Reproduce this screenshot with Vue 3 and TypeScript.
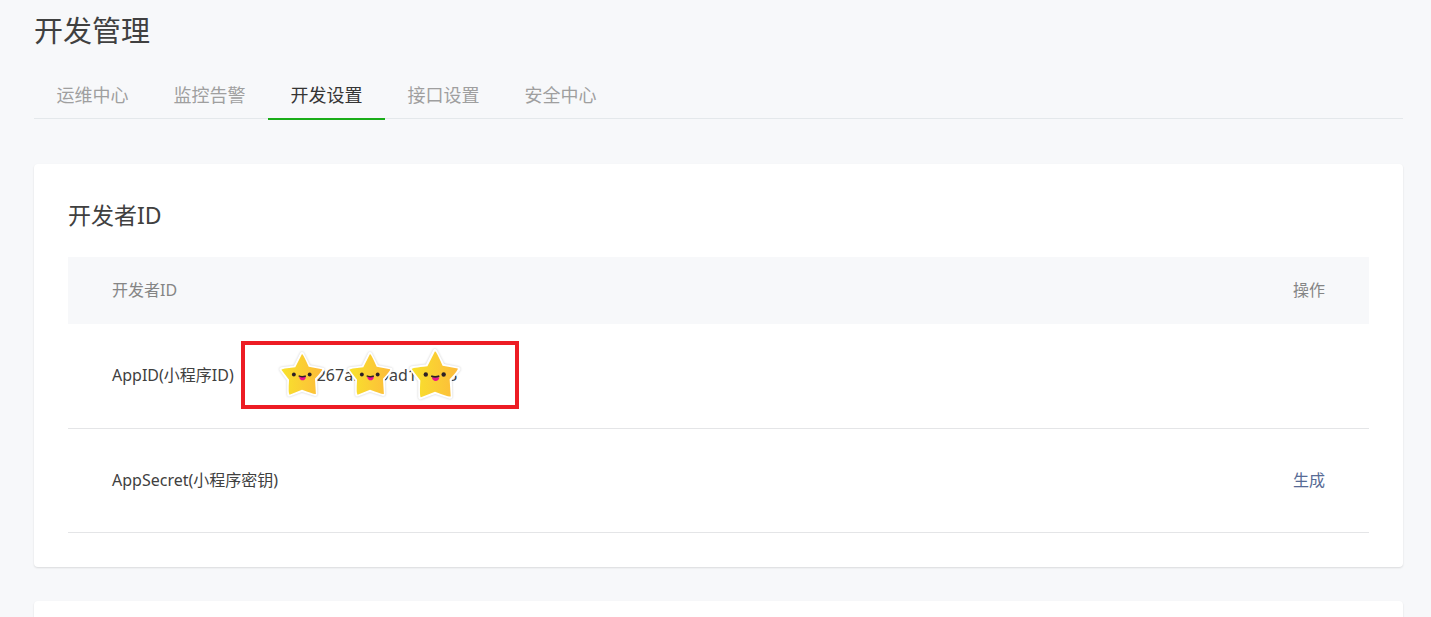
<script setup lang="ts">
import { ref } from 'vue'

const tabs: string[] = ['运维中心', '监控告警', '开发设置', '接口设置', '安全中心']
const activeTab = ref<string>('开发设置')
const stars: string[] = ['first', 'second', 'third']
</script>

<template>
  <main class="page">
    <h1 class="title">开发管理</h1>
    <nav class="tabs">
      <a
        v-for="tab in tabs"
        :key="tab"
        href="#"
        class="tab"
        :class="{ active: tab === activeTab }"
        @click.prevent="activeTab = tab"
      >{{ tab }}</a>
    </nav>

    <section class="card">
      <h2 class="card-title">开发者ID</h2>
      <table class="table">
        <thead>
          <tr>
            <th scope="col">开发者ID</th>
            <th scope="col" class="action">操作</th>
          </tr>
        </thead>
        <tbody>
          <tr>
            <td>
              <div class="entry">
                <span>AppID(小程序ID)</span>
                <div class="frame">
                  <span>1c1267abc49ad1ec4f3</span>
                  <svg v-for="star in stars" :key="star" class="star" :class="star" viewBox="0 0 48 48" aria-hidden="true">
                    <defs>
                      <linearGradient :id="`gold-${star}`" x1="0" y1="0" x2="1" y2="0">
                        <stop offset="0" stop-color="#f8e22c" />
                        <stop offset="1" stop-color="#fdbb3b" />
                      </linearGradient>
                    </defs>
                    <path class="halo" d="M24 2 L31 15.500 L45.500 18.500 L37.500 28 L38 44 L24 39.500 L10.500 44.500 L10.500 29 L2.500 18 L17 16 Z" />
                    <path :fill="`url(#gold-${star})`" d="M24 2 Q25.500 2.500 31 15.500 L45 18 Q46 19 37.500 28 L38.500 43.500 Q38 45 24 39.500 L11 44.500 Q9.500 44 10.500 29 L2.500 18.500 Q2.500 17.500 17 16 Z" />
                    <circle cx="15.500" cy="23.500" r="2" fill="#2c2026" />
                    <circle cx="32" cy="23.500" r="2" fill="#2c2026" />
                    <path d="M21 26 H28 Q27.500 29.500 24.500 29.500 Q22 29.500 21 26" fill="#ec148c" />
                    <path d="M20.500 25 Q24 26.500 28 25" fill="none" stroke="#2c2026" stroke-width="1.500" />
                  </svg>
                </div>
              </div>
            </td>
            <td class="action"></td>
          </tr>
          <tr>
            <td>AppSecret(小程序密钥)</td>
            <td class="action"><a href="#" class="link" @click.prevent>生成</a></td>
          </tr>
        </tbody>
      </table>
    </section>

    <section class="card next"></section>
  </main>
</template>

<style>
body {
  background: #f7f8fa;
}
</style>

<style scoped>
.page {
  height: 100vh;
  overflow: hidden;
  box-sizing: border-box;
  padding: 10px 28px 0 34px;
  font-family: "Noto Sans", "Noto Sans CJK SC", sans-serif;
  font-size: 16px;
  line-height: 24px;
  color: #404040;
}

.title {
  margin: 0;
  font-size: 29px;
  line-height: 42px;
  font-weight: 400;
}

.tabs {
  display: flex;
  margin-top: 20px;
  height: 46px;
  border-bottom: 1px solid #e4e8eb;
}

.tab {
  box-sizing: border-box;
  width: 117px;
  height: 48px;
  font-size: 18px;
  line-height: 46px;
  text-align: center;
  text-decoration: none;
  color: #9f9f9f;
}

.tab.active {
  border-bottom: 2px solid #1aad19;
  color: #353535;
}

.card {
  margin-top: 45px;
  padding: 34px;
  border-radius: 4px;
  background: #fff;
  box-shadow: 0 1px 2px rgba(0, 0, 0, 0.12);
}

.card.next {
  margin-top: 34px;
  height: 160px;
}

.card-title {
  margin: 0 0 24px;
  font-size: 23px;
  line-height: 35px;
  font-weight: 400;
}

.table {
  width: 100%;
  border-collapse: separate;
  border-spacing: 0;
}

th,
td {
  box-sizing: border-box;
  padding: 0 44px 2px;
  text-align: left;
  vertical-align: middle;
}

th {
  height: 67px;
  background: #f7f8fa;
  font-weight: 400;
  color: #858585;
}

td {
  height: 105px;
  border-bottom: 1px solid #e4e5e7;
}

tr:last-child td {
  height: 104px;
}

.table .action {
  text-align: right;
}

.link {
  color: #576b95;
  text-decoration: none;
}

.entry {
  display: flex;
  align-items: center;
  gap: 7px;
}

.frame {
  position: relative;
  box-sizing: border-box;
  width: 278px;
  height: 68px;
  padding-left: 46px;
  border: 4px solid #ed1c24;
  line-height: 60px;
}

.star {
  position: absolute;
  width: 46px;
  height: 46px;
  overflow: visible;
}

.star.first {
  left: 34px;
  top: 7px;
}

.star.second {
  left: 102px;
  top: 7px;
}

.star.third {
  left: 164px;
  top: 4px;
  width: 52px;
  height: 52px;
}

.halo {
  fill: #fff;
  stroke: #fff;
  stroke-width: 4px;
  stroke-linejoin: round;
  filter: drop-shadow(0 0 1px rgba(0, 0, 0, 0.2));
}
</style>
